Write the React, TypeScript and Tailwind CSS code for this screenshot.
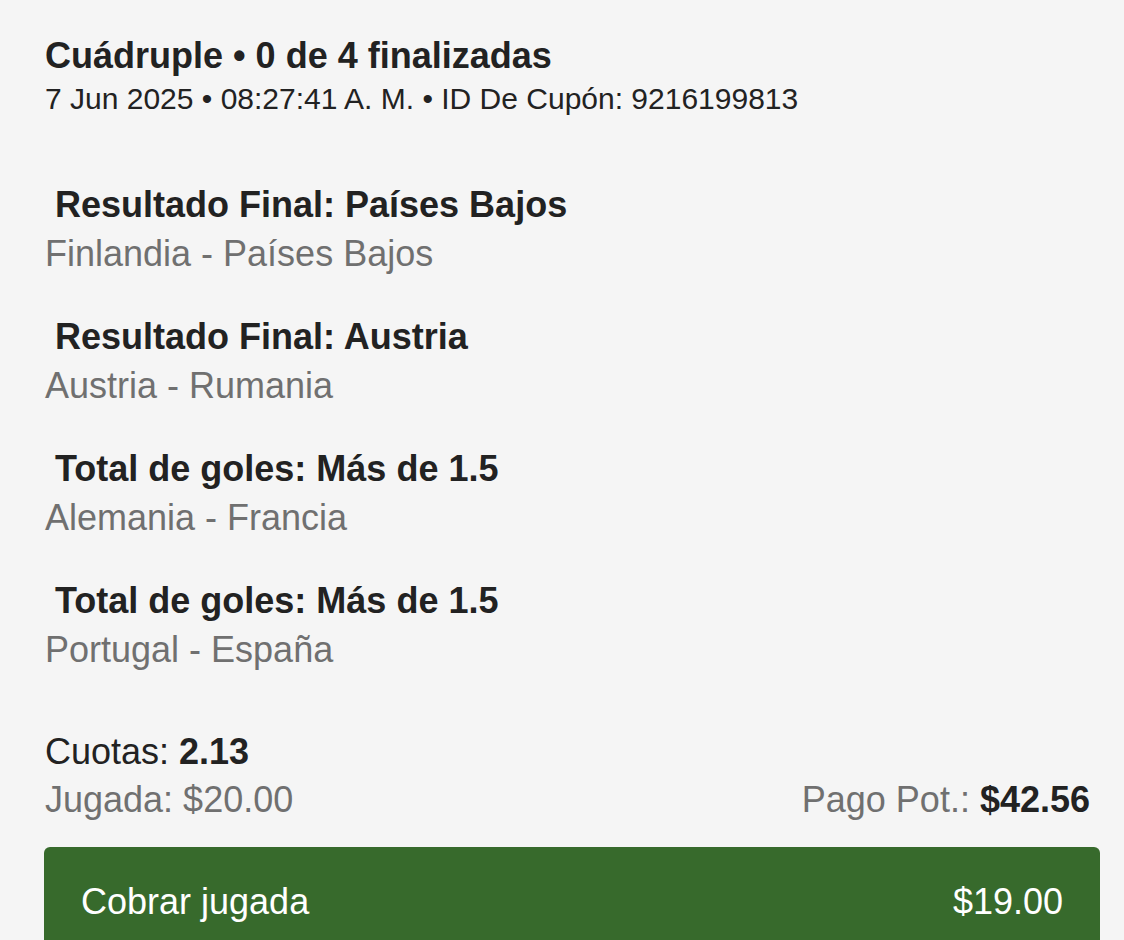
const selections = [
  { market: "Resultado Final: Países Bajos", match: "Finlandia - Países Bajos" },
  { market: "Resultado Final: Austria", match: "Austria - Rumania" },
  { market: "Total de goles: Más de 1.5", match: "Alemania - Francia" },
  { market: "Total de goles: Más de 1.5", match: "Portugal - España" },
];

export default function App() {
  return (
    <div className="w-[1124px] h-[940px] overflow-hidden bg-[#f5f5f5] text-[#222222] font-['Liberation_Sans',Arial,sans-serif]">
      <div className="pl-[45px] pr-[24px] pt-[32px]">
        <h1 className="text-[36px] font-bold leading-[48px]">
          Cuádruple • 0 de 4 finalizadas
        </h1>
        <p className="text-[30px] leading-[36px] mt-[1px]">
          7 Jun 2025 • 08:27:41 A. M. • ID De Cupón: 9216199813
        </p>

        <div className="mt-[64px] flex flex-col gap-[35px]">
          {selections.map((s, i) => (
            <div key={i} className="flex flex-col">
              <span className="pl-[10px] text-[36px] font-bold leading-[48px]">
                {s.market}
              </span>
              <span className="text-[36px] leading-[48px] text-[#707070] mt-[1px]">
                {s.match}
              </span>
            </div>
          ))}
        </div>

        <div className="mt-[54px] text-[36px] leading-[48px]">
          <div>
            Cuotas: <span className="font-bold">2.13</span>
          </div>
          <div className="flex justify-between pr-[10px] text-[#707070]">
            <span>Jugada: $20.00</span>
            <span>
              Pago Pot.: <span className="font-bold text-[#222222]">$42.56</span>
            </span>
          </div>
        </div>

        <button className="mt-[23px] w-[1056px] h-[120px] -ml-[1px] rounded-[6px] bg-[#376a2c] text-white text-[36px] leading-[48px] flex justify-between items-start pt-[31px] px-[37px]">
          <span>Cobrar jugada</span>
          <span>$19.00</span>
        </button>
      </div>
    </div>
  );
}
